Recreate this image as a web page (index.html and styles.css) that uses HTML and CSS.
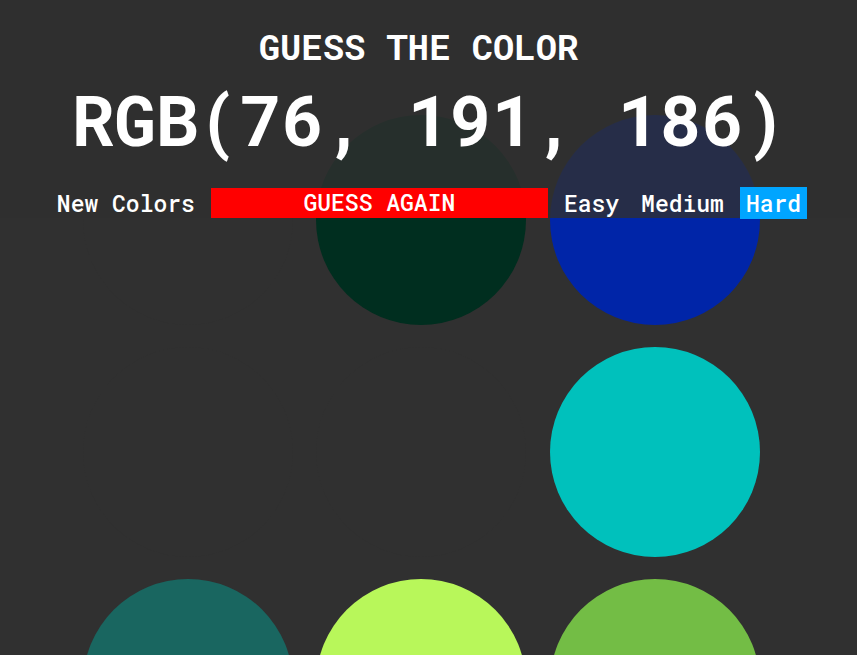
FILE: index.html
```html
<!DOCTYPE html>
<html lang="en">
<head>
<meta charset="utf-8">
<title>Guess the Color</title>
<link rel="stylesheet" href="styles.css">
</head>
<body>
<header class="header">
  <h1 class="title">GUESS THE COLOR</h1>
  <div class="rgb">RGB(76, 191, 186)</div>
  <nav class="nav">
    <button class="btn btn-new">New Colors</button>
    <span class="message">GUESS AGAIN</span>
    <button class="btn btn-easy">Easy</button>
    <button class="btn btn-medium">Medium</button>
    <button class="btn btn-hard selected">Hard</button>
  </nav>
</header>
<main class="board">
  <div class="circle c-hidden"></div>
  <div class="circle c-green"></div>
  <div class="circle c-blue"></div>
  <div class="circle c-hidden"></div>
  <div class="circle c-hidden"></div>
  <div class="circle c-cyan"></div>
  <div class="circle c-teal"></div>
  <div class="circle c-lime"></div>
  <div class="circle c-leaf"></div>
</main>
</body>
</html>
```
FILE: styles.css
```css
html, body {
  margin: 0;
  padding: 0;
  height: 100%;
  overflow: hidden;
}
body {
  background: #303030;
  color: #ffffff;
  font-family: "Roboto Mono", "DejaVu Sans Mono", monospace;
  position: relative;
  width: 857px;
}
.header {
  position: absolute;
  top: 0;
  left: 0;
  width: 857px;
  height: 218px;
  background: rgba(48, 48, 48, 0.8);
  z-index: 2;
}
.title {
  width: 837px;
  margin: 0;
  padding-top: 27px;
  font-size: 35.5px;
  line-height: 40px;
  font-weight: 700;
  text-align: center;
}
.rgb {
  width: 858px;
  margin-top: 12px;
  font-size: 70px;
  line-height: 80px;
  font-weight: 700;
  text-align: center;
  white-space: nowrap;
}
.nav {
  display: flex;
  justify-content: center;
  align-items: center;
  gap: 10px;
  margin-top: 28px;
  padding-left: 1px;
}
.btn {
  font-family: inherit;
  font-size: 23px;
  font-weight: 500;
  line-height: 30px;
  color: #ffffff;
  background: transparent;
  border: none;
  padding: 1px 6px;
  margin: 0;
  cursor: pointer;
}
.btn.selected {
  background: #00a5ff;
}
.message {
  width: 337px;
  height: 29.5px;
  line-height: 29.5px;
  background: #ff0000;
  color: #ffffff;
  text-align: center;
  font-size: 23px;
  font-weight: 500;
}
.board {
  display: grid;
  grid-template-columns: repeat(3, 210px);
  grid-auto-rows: 210px;
  column-gap: 23.3px;
  row-gap: 22px;
  padding-top: 115px;
  padding-left: 83px;
}
.circle {
  border-radius: 50%;
}
.c-hidden { background: #303030; }
.c-green { background: #002e1f; }
.c-blue { background: #0025a8; }
.c-cyan { background: #00c1bc; }
.c-teal { background: #196660; }
.c-lime { background: #b8f75a; }
.c-leaf { background: #73bd45; }
```
